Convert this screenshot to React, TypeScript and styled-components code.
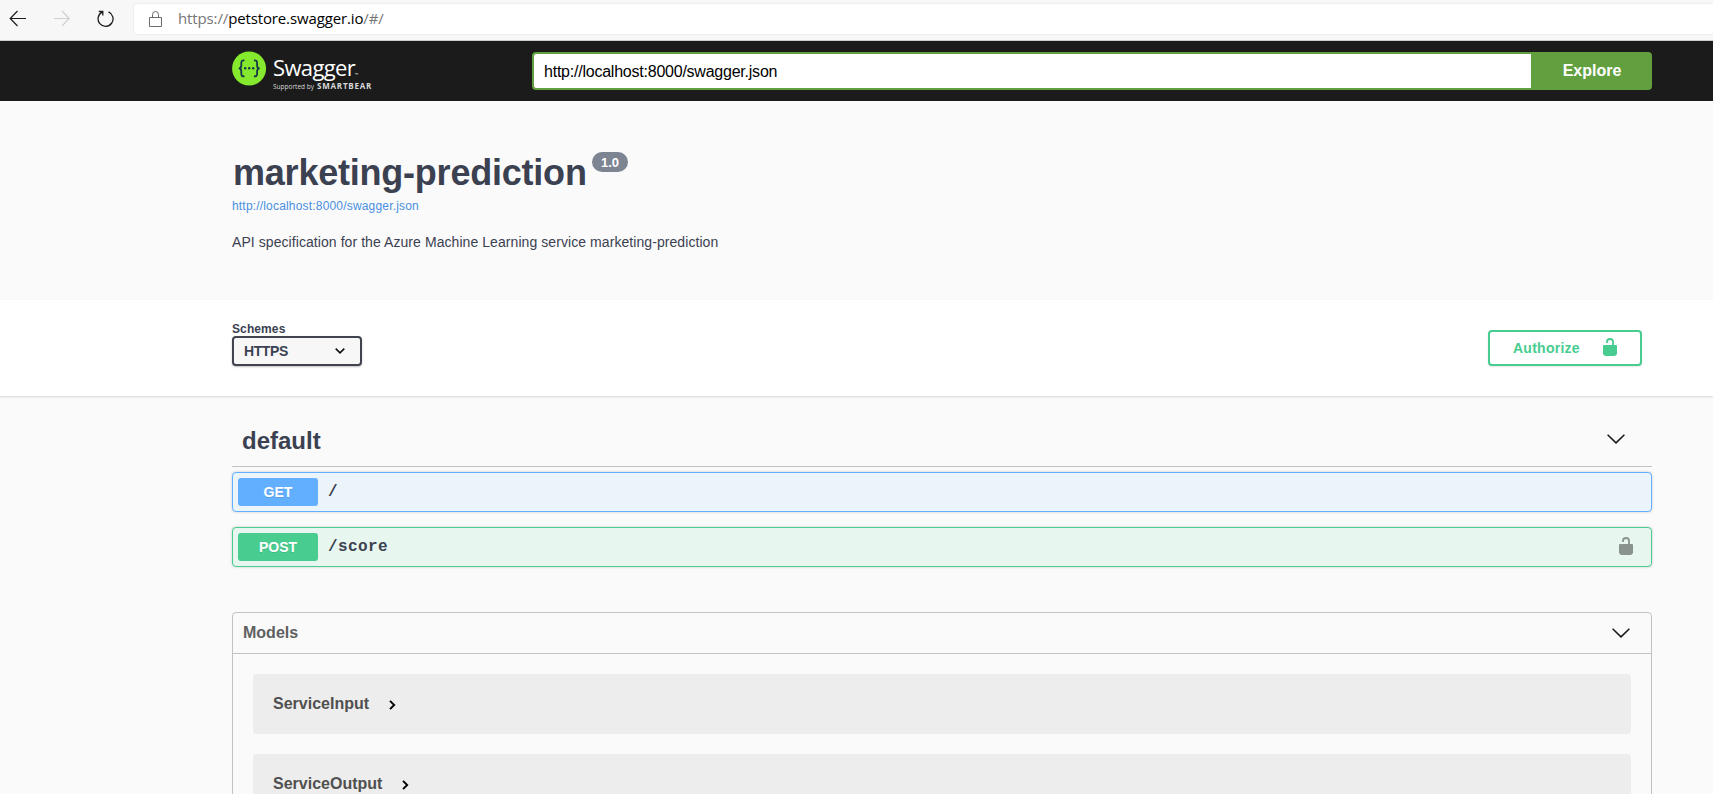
import React from "react";
import styled, { createGlobalStyle } from "styled-components";

const Global = createGlobalStyle`
  *, *::before, *::after { box-sizing: border-box; }
  body { margin: 0; background: #fafafa; color: #3b4151;
    font-family: "Liberation Sans", Arial, sans-serif; }
  h1, h2, h3, p { margin: 0; }
  svg { display: block; flex: none; }
`;

const Page = styled.div`
  height: 100vh;
  overflow: hidden;
`;

const BrowserBar = styled.header`
  height: 41px;
  display: flex;
  align-items: flex-start;
  background: #f7f7f7;
  border-bottom: 1px solid #cdcfce;
`;
const NavButtons = styled.div`
  display: flex;
  gap: 27px;
  padding: 10px 0 0 9px;
  width: 134px;
`;
const AddressBar = styled.div`
  flex: 1;
  height: 30px;
  margin-top: 4px;
  padding-left: 15px;
  display: flex;
  align-items: center;
  background: #fff;
  border-radius: 4px 0 0 4px;
  box-shadow: 0 0 2px rgba(0, 0, 0, 0.12);
`;
const Url = styled.span`
  margin-left: 16px;
  padding-bottom: 2px;
  font: 15px/20px "Open Sans", "Noto Sans", sans-serif;
  letter-spacing: -0.13px;
  color: #767676;
  white-space: nowrap;
`;
const Host = styled.span`
  color: #000;
`;

const Wrapper = styled.div`
  width: 1420px;
  margin-left: 232px;
`;

const TopBar = styled.div`
  height: 60px;
  background: #1b1b1b;
`;
const TopBarInner = styled(Wrapper)`
  display: flex;
  padding-top: 10px;
`;
const Brand = styled.div`
  width: 300px;
  display: flex;
  gap: 6px;
`;
const BrandText = styled.div`
  padding-top: 4px;
  font-family: "Open Sans", sans-serif;
  color: #fff;
  white-space: nowrap;
`;
const BrandName = styled.div`
  height: 26px;
  font-size: 22px;
  line-height: 24px;
  font-weight: 400;
  letter-spacing: -0.65px;
`;
const Trademark = styled.span`
  font-size: 4px;
  letter-spacing: 0;
`;
const BrandTag = styled.div`
  display: flex;
  align-items: baseline;
  gap: 3px;
  font-size: 6.5px;
  line-height: 10px;
  color: #d8d8d8;
`;
const BrandOwner = styled.b`
  font-size: 8px;
  letter-spacing: 0.8px;
`;
const SpecForm = styled.form`
  flex: 1;
  height: 38px;
  margin-top: 1px;
  display: flex;
`;
const SpecInput = styled.input`
  width: 999px;
  border: 2px solid #62a03f;
  border-right: 0;
  border-radius: 4px 0 0 4px;
  padding: 2px 10px 0;
  margin: 0;
  font: 16px "Liberation Sans", Arial, sans-serif;
  letter-spacing: -0.23px;
  color: #000;
  background: #fff;
  outline: none;
`;
const ExploreButton = styled.button`
  flex: 1;
  border: 0;
  border-radius: 0 4px 4px 0;
  background: #62a03f;
  color: #fff;
  padding: 0 0 0 1px;
  font: bold 16px "Liberation Sans", Arial, sans-serif;
`;

const Info = styled(Wrapper)`
  height: 199px;
  padding-top: 51px;
`;
const TitleRow = styled.div`
  display: flex;
  height: 40px;
`;
const Title = styled.h1`
  width: 360px;
  padding-left: 1px;
  font-size: 36px;
  line-height: 42px;
  letter-spacing: -0.22px;
  white-space: nowrap;
`;
const Version = styled.span`
  width: 36px;
  height: 20px;
  border-radius: 10px;
  background: #7d8492;
  color: #fff;
  font-size: 13px;
  font-weight: bold;
  line-height: 21px;
  text-align: center;
`;
const SpecLink = styled.a`
  display: block;
  margin-top: 6px;
  font-size: 12px;
  line-height: 16px;
  letter-spacing: 0.18px;
  color: #4990e2;
`;
const Description = styled.p`
  margin-top: 18px;
  font-size: 14px;
  line-height: 20px;
  letter-spacing: 0.07px;
`;

const SchemeBand = styled.section`
  height: 96px;
  background: #fff;
  box-shadow: 0 1px 2px rgba(0, 0, 0, 0.15);
`;
const SchemeInner = styled(Wrapper)`
  display: flex;
  justify-content: space-between;
  padding: 22px 10px 0 0;
`;
const SchemeLabel = styled.label`
  display: block;
  font-size: 12px;
  font-weight: bold;
  line-height: 14px;
  letter-spacing: 0.1px;
`;
const SchemeSelect = styled.div`
  width: 130px;
  height: 30px;
  padding: 0 15px 0 10px;
  display: flex;
  align-items: center;
  justify-content: space-between;
  border: 2px solid #41444e;
  border-radius: 4px;
  background: #f7f7f7;
  box-shadow: 0 1px 2px rgba(0, 0, 0, 0.25);
  font-size: 14px;
  font-weight: bold;
  letter-spacing: -0.4px;
`;
const AuthorizeButton = styled.button`
  width: 154px;
  height: 36px;
  margin: 8px 0 0;
  padding: 0 23px;
  display: flex;
  justify-content: space-between;
  border: 2px solid #49cc90;
  border-radius: 4px;
  background: #fff;
  box-shadow: 0 1px 2px rgba(0, 0, 0, 0.1);
  color: #49cc90;
  font: bold 14px/33px "Liberation Sans", Arial, sans-serif;
  letter-spacing: 0.25px;
  svg { margin-top: 6px; }
`;

const TagHeader = styled.div`
  height: 71px;
  padding: 19px 27px 0 10px;
  display: flex;
  align-items: center;
  justify-content: space-between;
  border-bottom: 1px solid rgba(59, 65, 81, 0.3);
  svg { margin-bottom: 3px; }
`;
const TagName = styled.h2`
  font-size: 24px;
  line-height: 30px;
`;
const tones = {
  get: { main: "#61affe", tint: "#ebf3fb" },
  post: { main: "#49cc90", tint: "#e8f6f0" },
};
type Tone = keyof typeof tones;
const Operation = styled.div<{ $tone: Tone }>`
  height: 40px;
  margin: 5px 0 15px;
  padding: 0 18px 0 5px;
  display: flex;
  align-items: center;
  border: 1px solid ${(p) => tones[p.$tone].main};
  border-radius: 4px;
  background: ${(p) => tones[p.$tone].tint};
  box-shadow: 0 0 3px rgba(0, 0, 0, 0.19);
  & + & { margin-top: 0; }
  svg { margin-bottom: 2px; }
`;
const Method = styled.span<{ $tone: Tone }>`
  width: 80px;
  height: 28px;
  border-radius: 3px;
  background: ${(p) => tones[p.$tone].main};
  color: #fff;
  font-size: 14px;
  font-weight: bold;
  line-height: 28px;
  text-align: center;
  text-shadow: 0 1px 0 rgba(0, 0, 0, 0.1);
`;
const Path = styled.span`
  flex: 1;
  padding: 0 0 0 10px;
  font: bold 16px/20px "Courier New", "Liberation Mono", monospace;
  letter-spacing: 0.4px;
`;

const Models = styled.section`
  margin-top: 45px;
  height: 300px;
  border: 1px solid rgba(59, 65, 81, 0.3);
  border-radius: 4px;
`;
const ModelsHeader = styled.div`
  height: 41px;
  padding: 0 21px 0 10px;
  display: flex;
  align-items: center;
  justify-content: space-between;
  border-bottom: 1px solid rgba(59, 65, 81, 0.3);
`;
const ModelsTitle = styled.h3`
  font-size: 16px;
  line-height: 20px;
  color: #606060;
`;
const Model = styled.div`
  height: 60px;
  margin: 20px 20px 0;
  padding-left: 20px;
  display: flex;
  align-items: center;
  gap: 20px;
  border-radius: 4px;
  background: #ededed;
  color: #505050;
  font-size: 16px;
  font-weight: bold;
  svg { margin-top: 2px; }
`;

const Chevron = () => (
  <svg width="18" height="10" viewBox="0 0 18 10" fill="none" stroke="#17181a" strokeWidth="1.5">
    <path d="M.6.7 9 8.9 17.4.7" />
  </svg>
);
const SmallChevron = () => (
  <svg width="10" height="6" viewBox="0 0 10 6" fill="none" stroke="#111" strokeWidth="1.6">
    <path d="M.7.6 5 4.8 9.3.6" />
  </svg>
);
const RightChevron = () => (
  <svg width="7" height="10" viewBox="0 0 7 10" fill="none" stroke="#000" strokeWidth="1.9">
    <path d="M1 .8 5.2 5 1 9.2" />
  </svg>
);
const OpenLock = ({ color }: { color: string }) => (
  <svg width="14" height="18" viewBox="0 0 14 18">
    <path d="M4 5V3.6Q4.2 1 7 1t3 2.6V8" fill="none" stroke={color} strokeWidth="1.8" />
    <path d="M1 7h12q1 0 1 1v7.6Q13.600 18 11.500 18h-9Q.4 18 0 15.600V8q0-1 1-1Z" fill={color} />
  </svg>
);
const SwaggerMark = () => (
  <svg width="35" height="35" viewBox="0 0 35 35" fill="none">
    <circle cx="17.100" cy="17.500" r="17" fill="#85ea2d" />
    <g stroke="#173647" strokeWidth="1.8">
      <path d="M12.500 9.300c-2.600-.2-3.200.8-3.200 2.700v2.400c0 1.900-.6 2.900-2.500 2.900 1.900 0 2.500 1 2.500 2.900v2.400c0 1.900.6 2.900 3.200 2.700" />
      <path d="M21.900 9.300c2.600-.2 3.200.8 3.200 2.700v2.400c0 1.900.6 2.900 2.500 2.900-1.900 0-2.500 1-2.500 2.900v2.400c0 1.900-.6 2.900-3.200 2.700" />
    </g>
    <g fill="#173647">
      <circle cx="13.200" cy="17.300" r="1.200" />
      <circle cx="17.200" cy="17.300" r="1.200" />
      <circle cx="21.200" cy="17.300" r="1.200" />
    </g>
  </svg>
);
const ArrowLeft = ({ color }: { color: string }) => (
  <svg width="18" height="17" viewBox="0 0 18 17" fill="none" stroke={color} strokeWidth="1.200">
    <path d="M17 8.500H1.500M8.500 1 1.200 8.500l7.300 7.500" />
  </svg>
);
const ArrowRight = ({ color }: { color: string }) => (
  <svg width="16" height="17" viewBox="0 0 16 17" fill="none" stroke={color} strokeWidth="1.200">
    <path d="M0 8.500h15M8 1l7.200 7.500L8 16" />
  </svg>
);
const Reload = () => (
  <svg width="17" height="18" viewBox="0 0 17 18" fill="none" stroke="#1c1c1c" strokeWidth="1.300">
    <path d="M11.500 1.900a7.500 7.500 0 1 1-6.300.2M1.800 1.500h4v4" />
  </svg>
);
const Padlock = () => (
  <svg width="13" height="16" viewBox="0 0 13 16" fill="none" stroke="#6c6c6c">
    <path d="M.5 6.500h12v9H.5zM3.500 6.500V3.600Q3.500.5 6.500.5t3 3.100v2.900" />
  </svg>
);

const models = ["ServiceInput", "ServiceOutput"];

export default function App() {
  return (
    <Page>
      <Global />
      <BrowserBar>
        <NavButtons>
          <ArrowLeft color="#1c1c1c" />
          <ArrowRight color="#d0d0d0" />
          <Reload />
        </NavButtons>
        <AddressBar>
          <Padlock />
          <Url>https://<Host>petstore.swagger.io</Host>/#/</Url>
        </AddressBar>
      </BrowserBar>
      <TopBar>
        <TopBarInner>
          <Brand>
            <SwaggerMark />
            <BrandText>
              <BrandName>Swagger<Trademark>™</Trademark></BrandName>
              <BrandTag>Supported by <BrandOwner>SMARTBEAR</BrandOwner></BrandTag>
            </BrandText>
          </Brand>
          <SpecForm>
            <SpecInput defaultValue="http://localhost:8000/swagger.json" />
            <ExploreButton type="button">Explore</ExploreButton>
          </SpecForm>
        </TopBarInner>
      </TopBar>
      <Info>
        <TitleRow>
          <Title>marketing-prediction</Title>
          <Version>1.0</Version>
        </TitleRow>
        <SpecLink>http://localhost:8000/swagger.json</SpecLink>
        <Description>
          API specification for the Azure Machine Learning service marketing-prediction
        </Description>
      </Info>
      <SchemeBand>
        <SchemeInner>
          <div>
            <SchemeLabel>Schemes</SchemeLabel>
            <SchemeSelect>HTTPS<SmallChevron /></SchemeSelect>
          </div>
          <AuthorizeButton type="button">Authorize<OpenLock color="#49cc90" /></AuthorizeButton>
        </SchemeInner>
      </SchemeBand>
      <Wrapper>
        <TagHeader>
          <TagName>default</TagName>
          <Chevron />
        </TagHeader>
        <Operation $tone="get">
          <Method $tone="get">GET</Method>
          <Path>/</Path>
        </Operation>
        <Operation $tone="post">
          <Method $tone="post">POST</Method>
          <Path>/score</Path>
          <OpenLock color="#8b938f" />
        </Operation>
        <Models>
          <ModelsHeader>
            <ModelsTitle>Models</ModelsTitle>
            <Chevron />
          </ModelsHeader>
          {models.map((name) => (
            <Model key={name}>{name}<RightChevron /></Model>
          ))}
        </Models>
      </Wrapper>
    </Page>
  );
}
